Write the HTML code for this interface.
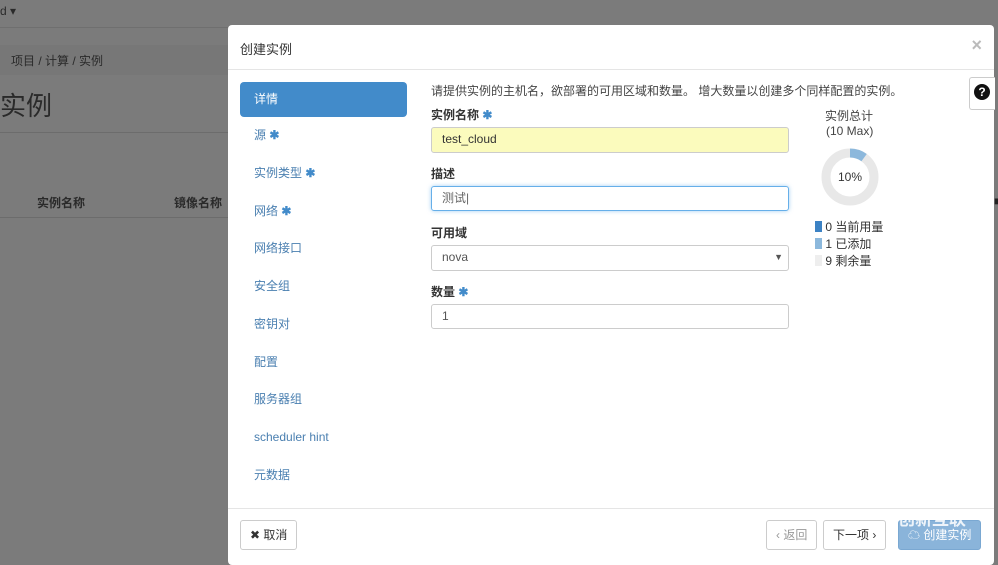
<!DOCTYPE html>
<html><head><meta charset="utf-8"><style>
body{margin:0;width:998px;height:547px;overflow:hidden;background:#7b7b7b;font-family:"Liberation Sans","Noto Sans CJK SC",sans-serif;font-size:12px;color:#333;position:relative}
.a{position:absolute}
.bgtxt{color:#2a2a2a}
.modal{left:228px;top:25px;width:766px;height:540px;background:#fff;border-radius:4px}
.nav{left:12px;width:167px;height:35px;line-height:35px;padding-left:14px;box-sizing:border-box;color:#4a7fb0;font-size:12px}
.nav.act{background:#428bca;color:#fff;border-radius:4px}
.star{color:#428bca;font-weight:bold}
.nav.act .star{color:#fff}
label{position:absolute;font-weight:bold;font-size:12px;color:#333}
.inp{position:absolute;left:203px;width:358px;height:24px;border:1px solid #ccc;border-radius:3px;box-sizing:border-box;padding-left:10px;line-height:22px;font-size:12px}
.btn{position:absolute;border:1px solid #ccc;border-radius:3px;height:30px;line-height:28px;box-sizing:border-box;padding:0 9px;font-size:12px;background:#fff}
</style></head><body>
<div class="a bgtxt" style="left:0;top:4px;font-size:12px">d ▾</div>
<div class="a" style="left:0;top:27px;width:228px;height:1px;background:#6f6f6f"></div>
<div class="a" style="left:0;top:45px;width:228px;height:30px;background:#777"></div>
<div class="a bgtxt" style="left:11px;top:52px">项目 / 计算 / 实例</div>
<div class="a bgtxt" style="left:0;top:86px;font-size:26px">实例</div>
<div class="a" style="left:0;top:132px;width:228px;height:1px;background:#6c6c6c"></div>
<div class="a bgtxt" style="left:37px;top:194px;font-weight:bold">实例名称</div>
<div class="a bgtxt" style="left:174px;top:194px;font-weight:bold">镜像名称</div>
<div class="a" style="left:0;top:217px;width:228px;height:1px;background:#6c6c6c"></div>
<div class="a" style="left:994px;top:194px;color:#222">■</div>

<div class="a modal">
 <div class="a" style="left:12px;top:14px;font-size:13px;color:#333">创建实例</div>
 <div class="a" style="right:12px;top:10px;font-size:18px;color:#bbb;font-weight:bold">×</div>
 <div class="a" style="left:0;top:44px;width:766px;height:1px;background:#e5e5e5"></div>
 <div class="a nav act" style="top:57px">详情</div>
 <div class="a nav" style="top:93px">源 <span class="star">✱</span></div>
 <div class="a nav" style="top:131px">实例类型 <span class="star">✱</span></div>
 <div class="a nav" style="top:169px">网络 <span class="star">✱</span></div>
 <div class="a nav" style="top:206px">网络接口</div>
 <div class="a nav" style="top:244px">安全组</div>
 <div class="a nav" style="top:282px">密钥对</div>
 <div class="a nav" style="top:320px">配置</div>
 <div class="a nav" style="top:357px">服务器组</div>
 <div class="a nav" style="top:395px">scheduler hint</div>
 <div class="a nav" style="top:433px">元数据</div>

 <div class="a" style="left:203px;top:57px;color:#444">请提供实例的主机名，欲部署的可用区域和数量。 增大数量以创建多个同样配置的实例。</div>
 <label style="left:203px;top:81px">实例名称 <span class="star">✱</span></label>
 <div class="inp" style="top:102px;height:26px;background:#fbfbbd">test_cloud</div>
 <label style="left:203px;top:140px">描述</label>
 <div class="inp" style="top:161px;height:25px;border-color:#66afe9;box-shadow:0 0 4px rgba(102,175,233,.6);color:#666">测试|</div>
 <label style="left:203px;top:199px">可用域</label>
 <div class="inp" style="top:220px;height:26px;color:#555">nova<span style="position:absolute;right:5px;font-size:9px;color:#555">▼</span></div>
 <label style="left:203px;top:258px">数量 <span class="star">✱</span></label>
 <div class="inp" style="top:279px;height:25px;color:#555">1</div>

 <div class="a" style="left:597px;top:82px;color:#444">实例总计</div>
 <div class="a" style="left:598px;top:99px;color:#444">(10 Max)</div>
 <svg class="a" style="left:593px;top:123px" width="58" height="58" viewBox="0 0 58 58">
  <circle cx="29" cy="29" r="24" fill="none" stroke="#e8e8e8" stroke-width="9"/>
  <path d="M29 5 A24 24 0 0 1 43.1 9.6" fill="none" stroke="#8cb8dc" stroke-width="9"/>
  <text x="29" y="33" text-anchor="middle" font-size="12" fill="#333" font-family="Liberation Sans">10%</text>
 </svg>
 <div class="a" style="left:587px;top:194px;color:#333;line-height:17px">
  <div><span style="display:inline-block;width:7px;height:11px;background:#3c82c4;vertical-align:-1px"></span> 0 当前用量</div>
  <div><span style="display:inline-block;width:7px;height:11px;background:#8cb8dc;vertical-align:-1px"></span> 1 已添加</div>
  <div><span style="display:inline-block;width:7px;height:11px;background:#eee;vertical-align:-1px"></span> 9 剩余量</div>
 </div>
 <div class="a" style="left:741px;top:52px;width:25px;height:31px;border:1px solid #ccc;border-right:none;border-radius:3px 0 0 3px;background:#fff"></div>
 <div class="a" style="left:746px;top:59px;width:16px;height:16px;border-radius:50%;background:#111;color:#fff;font-weight:bold;font-size:12px;text-align:center;line-height:16px">?</div>

 <div class="a" style="left:0;top:483px;width:766px;height:1px;background:#e5e5e5"></div>
 <div class="btn" style="left:12px;top:495px;color:#333">✖ 取消</div>
 <div class="btn" style="left:538px;top:495px;color:#999">‹ 返回</div>
 <div class="btn" style="left:595px;top:495px;color:#333">下一项 ›</div>
 <div class="btn" style="left:670px;top:495px;background:#8ab4da;border-color:#7aa8d2;color:#fff">☁ 创建实例</div>
 <div class="a" style="left:670px;top:480px;color:rgba(255,255,255,.85);font-size:17px;font-weight:bold">创新互联</div>
</div>
</body></html>
